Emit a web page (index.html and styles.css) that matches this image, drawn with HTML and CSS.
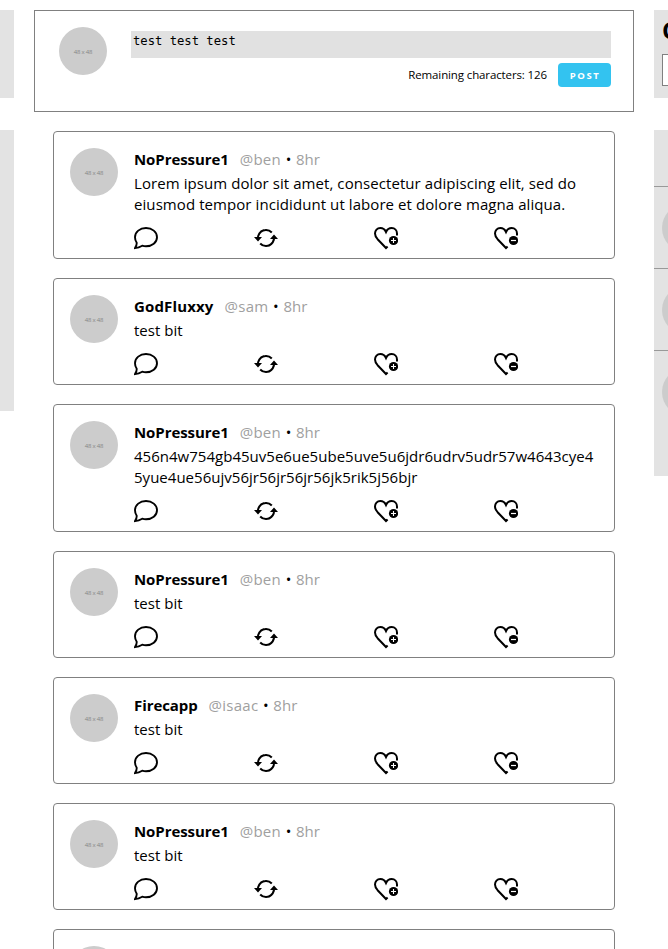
FILE: index.html
```
<!DOCTYPE html>
<html lang="en">
<head>
<meta charset="utf-8">
<title>Home</title>
<link rel="stylesheet" href="styles.css">
</head>
<body>
<svg class="defs" width="0" height="0" aria-hidden="true">
  <symbol id="comment" viewBox="0 0 24 24"><path d="M1 22.1C2.3 20.1 2.8 18.3 2.7 16.8C1.6 15.2 1 13.3 1 11.3C1 5.9 5.9 2 12 2S23 5.9 23 11.2S18.1 20.3 12 20.3C10.7 20.3 9.4 20.1 8.2 19.7C6 21 3.6 21.8 1 22.1Z" fill="none" stroke="#000" stroke-width="1.9"/></symbol>
  <symbol id="repost" viewBox="0 0 24 24"><g fill="none" stroke="#000" stroke-width="2"><path d="M6.3 6.3A8 8 0 0 1 17.8 6.5M20 11A8 8 0 0 1 14.2 19.7M17.7 17.7A8 8 0 0 1 6.2 17.5M4 13A8 8 0 0 1 9.8 4.3"/></g><path d="M0 11H8L4 15.5ZM16 13H24L20 8.5Z"/></symbol>
  <symbol id="heart" viewBox="0 0 24 24"><path d="M13.6 20.5L12 22L3.6 13.2C1.9 11.3 1 9.6 1 7.6C1 4.4 3.2 2 6.3 2C9 2 11 3.6 12 6C13 3.6 15 2 17.7 2C20.8 2 23 4.4 23 7.6V9.5" fill="none" stroke="#000" stroke-width="2"/><circle cx="19.5" cy="14.5" r="4.6"/></symbol>
  <symbol id="like" viewBox="0 0 24 24"><use href="#heart"/><path d="M17 14.5H22M19.5 12V17" stroke="#fff" stroke-width="1.1"/></symbol>
  <symbol id="unlike" viewBox="0 0 24 24"><use href="#heart"/><path d="M17 14.5H22" stroke="#fff" stroke-width="1.2"/></symbol>
</svg>
<div class="layout">
  <aside class="side">
    <div class="panel search"></div>
    <div class="panel profile"></div>
  </aside>
  <main class="main">
    <form class="composer">
      <div class="avatar">48 x 48</div>
      <div class="entry">
        <div class="field">test test test</div>
        <div class="send"><span class="remaining">Remaining characters: 126</span><button class="post" type="button">POST</button></div>
      </div>
    </form>
    <article class="card">
      <div class="avatar">48 x 48</div>
      <div class="body">
        <div class="meta"><b class="name">NoPressure1</b><span class="handle">@ben</span><span class="dot">•</span><span class="time">8hr</span></div>
        <p class="text prose">Lorem ipsum dolor sit amet, consectetur adipiscing elit, sed do<br>eiusmod tempor incididunt ut labore et dolore magna aliqua.</p>
        <div class="actions"><svg><use href="#comment"/></svg><svg><use href="#repost"/></svg><svg><use href="#like"/></svg><svg><use href="#unlike"/></svg></div>
      </div>
    </article>
    <article class="card">
      <div class="avatar">48 x 48</div>
      <div class="body">
        <div class="meta"><b class="name wide">GodFluxxy</b><span class="handle">@sam</span><span class="dot">•</span><span class="time">8hr</span></div>
        <p class="text">test bit</p>
        <div class="actions"><svg><use href="#comment"/></svg><svg><use href="#repost"/></svg><svg><use href="#like"/></svg><svg><use href="#unlike"/></svg></div>
      </div>
    </article>
    <article class="card">
      <div class="avatar">48 x 48</div>
      <div class="body">
        <div class="meta"><b class="name">NoPressure1</b><span class="handle">@ben</span><span class="dot">•</span><span class="time">8hr</span></div>
        <p class="text">456n4w754gb45uv5e6ue5ube5uve5u6jdr6udrv5udr57w4643cye4<br>5yue4ue56ujv56jr56jr56jr56jk5rik5j56bjr</p>
        <div class="actions"><svg><use href="#comment"/></svg><svg><use href="#repost"/></svg><svg><use href="#like"/></svg><svg><use href="#unlike"/></svg></div>
      </div>
    </article>
    <article class="card">
      <div class="avatar">48 x 48</div>
      <div class="body">
        <div class="meta"><b class="name">NoPressure1</b><span class="handle">@ben</span><span class="dot">•</span><span class="time">8hr</span></div>
        <p class="text">test bit</p>
        <div class="actions"><svg><use href="#comment"/></svg><svg><use href="#repost"/></svg><svg><use href="#like"/></svg><svg><use href="#unlike"/></svg></div>
      </div>
    </article>
    <article class="card">
      <div class="avatar">48 x 48</div>
      <div class="body">
        <div class="meta"><b class="name">Firecapp</b><span class="handle">@isaac</span><span class="dot">•</span><span class="time">8hr</span></div>
        <p class="text">test bit</p>
        <div class="actions"><svg><use href="#comment"/></svg><svg><use href="#repost"/></svg><svg><use href="#like"/></svg><svg><use href="#unlike"/></svg></div>
      </div>
    </article>
    <article class="card">
      <div class="avatar">48 x 48</div>
      <div class="body">
        <div class="meta"><b class="name">NoPressure1</b><span class="handle">@ben</span><span class="dot">•</span><span class="time">8hr</span></div>
        <p class="text">test bit</p>
        <div class="actions"><svg><use href="#comment"/></svg><svg><use href="#repost"/></svg><svg><use href="#like"/></svg><svg><use href="#unlike"/></svg></div>
      </div>
    </article>
    <article class="card">
      <div class="avatar"></div>
      <div class="body"></div>
    </article>
  </main>
  <aside class="side">
    <div class="panel search find"><h2 class="title">C</h2><div class="box"></div></div>
    <div class="panel people">
      <div class="head"></div>
      <div class="person"><div class="avatar"></div></div>
      <div class="person"><div class="avatar"></div></div>
      <div class="person"><div class="avatar"></div></div>
    </div>
  </aside>
</div>
</body>
</html>
```
FILE: styles.css
```
* { box-sizing: border-box; }
body { margin: 0; height: 949px; overflow: hidden; background: #fff; color: #000; font-family: "Open Sans", "Noto Sans", sans-serif; font-size: 15px; }
.defs { display: block; }
.layout { display: grid; grid-template-columns: 14px 600px 14px; column-gap: 20px; height: 949px; padding-top: 10px; overflow: hidden; }
.side { overflow: hidden; }
.panel { background: #e3e3e3; }
.search { height: 88px; margin-bottom: 32px; }
.profile { height: 281px; }
.find { padding: 4px 0 0 8px; width: 200px; }
.title { margin: 0; height: 40px; font-size: 24px; line-height: 31px; }
.box { width: 180px; height: 32px; border: 1px solid #808080; background: #fff; }
.people { width: 200px; height: 346px; }
.head { height: 56px; }
.person { height: 82px; border-top: 1px solid #999; padding: 17px 8px; }
.avatar { flex: none; width: 48px; height: 48px; border-radius: 50%; background: #ccc; color: #858585; font-size: 6px; line-height: 51px; text-align: center; letter-spacing: -0.2px; }
.composer { display: flex; gap: 24px; height: 102px; margin-bottom: 19px; padding: 16px 22px 0 24px; border: 1px solid #808080; }
.entry { width: 480px; padding-top: 4px; }
.field { height: 27px; padding-left: 2px; background: #e1e1e1; font: 12.2px/20px "DejaVu Sans Mono", monospace; }
.send { display: flex; justify-content: flex-end; align-items: center; gap: 11px; margin-top: 5px; height: 24px; }
.remaining { padding-bottom: 2px; font-size: 11.5px; letter-spacing: -0.12px; white-space: nowrap; }
.post { width: 53px; height: 24px; padding: 1px 0 0 1px; border: 0; border-radius: 4px; background: #33c3f0; color: #fff; font: bold 9.5px/23px "Open Sans", sans-serif; letter-spacing: 1.6px; }
.card { display: flex; gap: 16px; width: 562px; margin: 0 0 19px 19px; padding: 16px 16px 8px; border: 1px solid #808080; border-radius: 4px; }
.body { width: 464px; }
.meta { display: flex; height: 25px; line-height: 23px; white-space: nowrap; }
.name { margin-right: 11px; letter-spacing: -0.08px; }
.wide { letter-spacing: 0.15px; }
.handle { letter-spacing: 0.25px; }
.handle, .time { color: #a0a0a0; }
.dot { width: 15px; text-align: center; font-size: 15px; }
.text { margin: 0 0 11px; line-height: 21px; letter-spacing: 0.02px; white-space: nowrap; }
.prose { letter-spacing: 0.075px; }
.actions { display: flex; gap: 96px; height: 24px; }
.actions svg { flex: none; width: 24px; height: 24px; }
```
